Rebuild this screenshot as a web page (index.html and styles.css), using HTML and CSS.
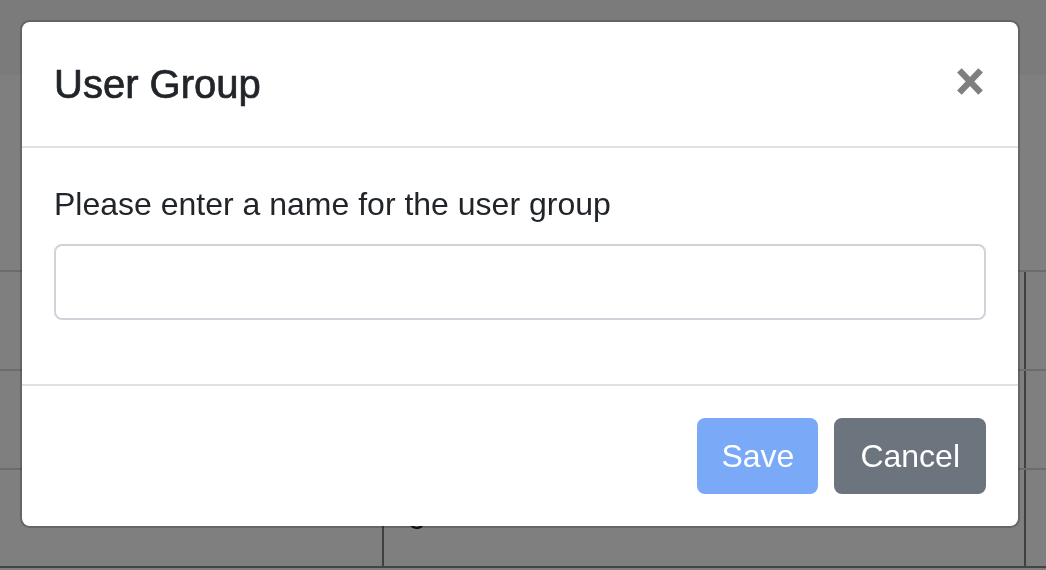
FILE: index.html
```html
<!DOCTYPE html>
<html lang="en">
<head>
<meta charset="utf-8">
<title>User Group</title>
<link rel="stylesheet" href="styles.css">
</head>
<body>
<div class="page">
  <div class="navbar"></div>
  <div class="content">
    <div class="grid-table">
      <div class="trow"><div class="tcell"></div><div class="tcell"></div><div class="tcell"></div></div>
      <div class="trow"><div class="tcell"></div><div class="tcell"></div><div class="tcell"></div></div>
      <div class="trow trow-last"><div class="tcell"></div><div class="tcell">general</div><div class="tcell"></div></div>
    </div>
  </div>
</div>
<div class="backdrop"></div>
<div class="modal">
  <div class="modal-header">
    <h5 class="modal-title">User Group</h5>
    <button class="close" type="button" aria-label="Close">
      <svg width="26" height="27" viewBox="0 0 26 27"><path d="M2.4 2.4 L23.6 24.6 M23.6 2.4 L2.4 24.6" stroke="#7f7f7f" stroke-width="6.4" fill="none"/></svg>
    </button>
  </div>
  <div class="modal-body">
    <div class="form-group">
      <label class="form-label" for="groupName">Please enter a name for the user group</label>
      <input class="form-control" id="groupName" type="text">
    </div>
  </div>
  <div class="modal-footer">
    <button class="btn btn-primary" type="button" disabled>Save</button>
    <button class="btn btn-secondary" type="button">Cancel</button>
  </div>
</div>
</body>
</html>
```

FILE: styles.css
```css
html, body {
  margin: 0;
  padding: 0;
}

body {
  background: #ffffff;
  font-family: "Liberation Sans", Arial, Helvetica, sans-serif;
  color: #212529;
  overflow: hidden;
}

.page {
  width: 1046px;
  height: 570px;
}

.navbar {
  height: 75px;
  background: #f6f7f8;
}

.content {
  padding-top: 195px;
}

.trow {
  display: grid;
  grid-template-columns: 382px 642px 1fr;
  height: 99px;
  box-sizing: border-box;
  border-top: 2px solid #d8d8d8;
}

.trow-last {
  height: 100px;
  border-bottom: 2px solid #888888;
}

.tcell {
  font-size: 32px;
  line-height: 48px;
  padding: 17px 24px 0;
  color: #212529;
}

.tcell + .tcell {
  border-left: 2px solid #808080;
}

.backdrop {
  position: fixed;
  inset: 0;
  background: rgba(0, 0, 0, 0.5);
}

.modal {
  position: fixed;
  top: 20px;
  left: 20px;
  width: 1000px;
  box-sizing: border-box;
  background: #ffffff;
  background-clip: padding-box;
  border: 2px solid rgba(0, 0, 0, 0.2);
  border-radius: 9.6px;
  display: flex;
  flex-direction: column;
}

.modal-header {
  display: flex;
  justify-content: space-between;
  align-items: flex-start;
  padding: 32px;
  border-bottom: 2px solid #dee2e6;
}

.modal-title {
  margin: 0;
  font-size: 40px;
  line-height: 60px;
  font-weight: 400;
  color: #212529;
  -webkit-text-stroke: 0.7px #212529;
}

.close {
  margin: 14px 3px 0 0;
  padding: 0;
  border: 0;
  background: transparent;
  display: flex;
}

.modal-body {
  padding: 32px;
}

.form-group {
  margin-bottom: 32px;
}

.form-label {
  display: block;
  font-size: 32px;
  line-height: 48px;
  margin-bottom: 16px;
  color: #212529;
}

.form-control {
  display: block;
  width: 100%;
  height: 76px;
  box-sizing: border-box;
  border: 2px solid #ced4da;
  border-radius: 8px;
  background: #ffffff;
  margin: 0;
  padding: 12px 24px;
  font-family: inherit;
  font-size: 32px;
}

.modal-footer {
  display: flex;
  justify-content: flex-end;
  align-items: center;
  padding: 24px;
  border-top: 2px solid #dee2e6;
}

.btn {
  margin: 8px;
  padding: 12px 22px;
  font-family: inherit;
  font-size: 32px;
  line-height: 48px;
  color: #ffffff;
  border: 2px solid transparent;
  border-radius: 8px;
}

.btn-primary {
  background: #7aa9f8;
  border-color: #7aa9f8;
}

.btn-secondary {
  background: #6c757d;
  border-color: #6c757d;
  padding: 12px 24px;
}
```
